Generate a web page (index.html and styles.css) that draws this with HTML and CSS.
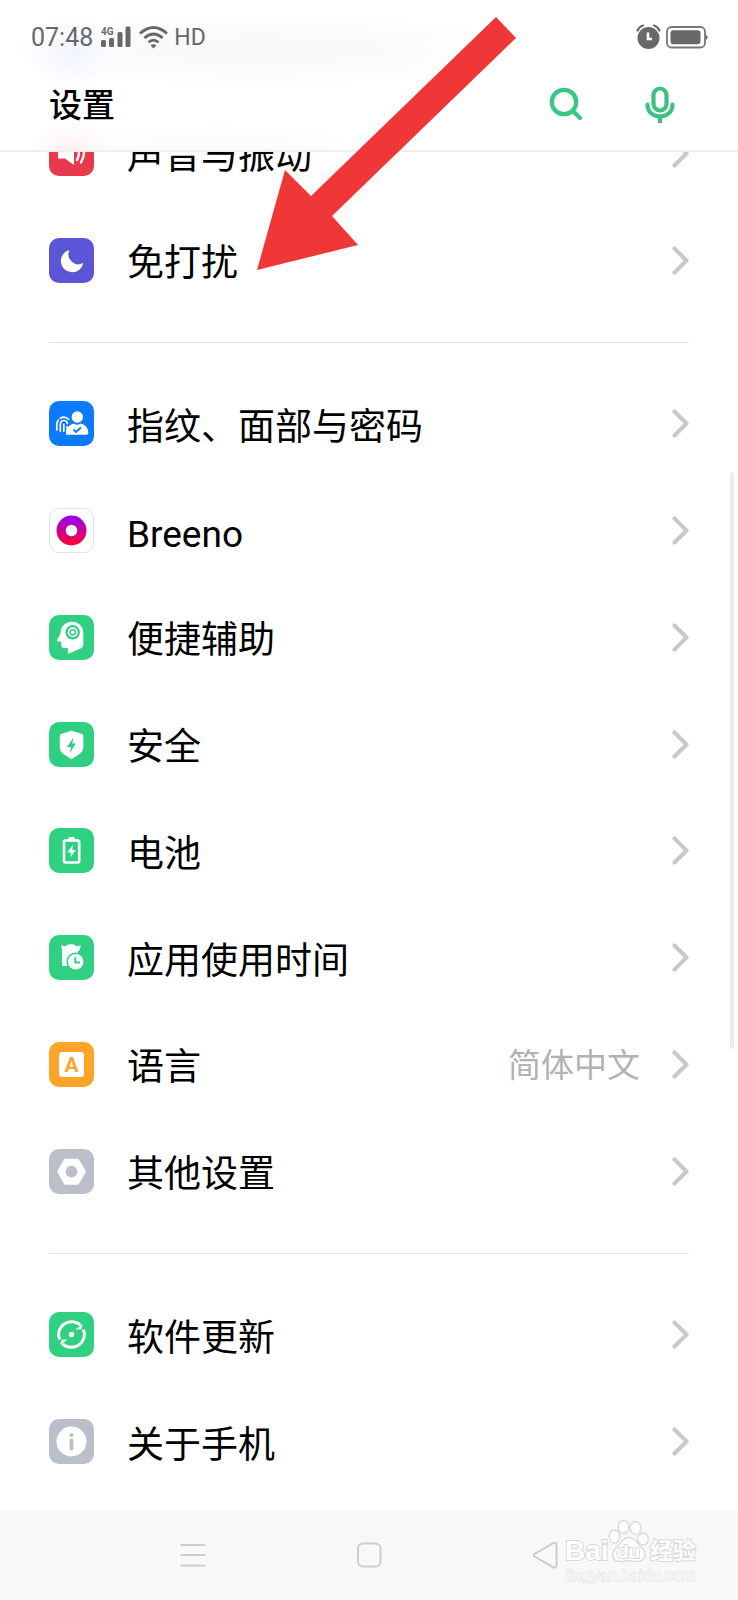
FILE: index.html
```html
<!DOCTYPE html>
<html lang="zh-CN">
<head>
<meta charset="utf-8">
<meta name="viewport" content="width=device-width, initial-scale=1">
<title>设置</title>
<link rel="stylesheet" href="styles.css">
</head>
<body>
<svg class="defs" aria-hidden="true">
  <symbol id="chevron" viewBox="0 0 17 29"><path d="M2.5 2.5L14.500 14.500L2.500 26.500" fill="none" stroke="#c9c9c9" stroke-width="4.200" stroke-linecap="round" stroke-linejoin="round"/></symbol>
</svg>
<div class="screen">
  <header class="topbar">
    <div class="status">
      <div class="status-group">
        <span class="clock">07:48</span>
        <span class="signal">
          <svg width="30" height="22" viewBox="0 0 30 22" fill="#686868"><rect x="0" y="14" width="5" height="7" rx="1.500"/><rect x="8" y="12" width="5" height="9" rx="1.500"/><rect x="16.500" y="6" width="5" height="15" rx="1.500"/><rect x="24.500" y="0.500" width="5" height="20.500" rx="1.500"/><text x="0" y="8.500" class="net">4G</text></svg>
        </span>
        <svg class="wifi" width="29" height="23" viewBox="0 0 29 23" fill="none" stroke="#686868" stroke-width="2.800"><path d="M1 7.500Q14.500-4.500 28 7.500"/><path d="M5.300 12Q14.500 4 23.700 12"/><path d="M9.500 16.300Q14.500 12 19.500 16.300"/><path d="M11.500 19.300Q14.500 17.300 17.500 19.300L14.500 22.500z" fill="#686868" stroke="none"/></svg>
        <span class="hd">HD</span>
      </div>
      <div class="status-group status-group--end">
        <svg width="25" height="26" viewBox="0 0 25 26"><circle cx="12.500" cy="14" r="11" fill="#686868"/><path d="M1.500 6.500Q3.500 2.500 7 1.500M23.500 6.500Q21.500 2.500 18 1.500" fill="none" stroke="#686868" stroke-width="2.200" stroke-linecap="round"/><path d="M12 8.500V15H16" fill="none" stroke="#fff" stroke-width="2.600"/></svg>
        <svg width="42" height="23" viewBox="0 0 42 23"><rect x="1" y="1" width="38" height="20.500" rx="4.500" fill="none" stroke="#777" stroke-width="1.800"/><rect x="4.500" y="4.300" width="30" height="14" rx="3" fill="#686868"/><path d="M39.500 8.500Q41.500 9 41.500 11.300T39.500 14z" fill="#686868"/></svg>
      </div>
    </div>
    <div class="titlebar">
      <h1 class="title">设置</h1>
      <div class="actions">
        <button class="action" type="button" aria-label="搜索"><svg width="34" height="34" viewBox="0 0 34 34" fill="none" stroke="#38c886" stroke-width="4.300" stroke-linecap="round"><circle cx="15" cy="15" r="12.200"/><path d="M24.500 24.500L31 31"/></svg></button>
        <button class="action" type="button" aria-label="语音搜索"><svg width="30" height="37" viewBox="0 0 30 37" fill="none" stroke="#3fc183" stroke-width="4.200"><rect x="8.500" y="2.500" width="13" height="22" rx="6.500"/><path d="M2.500 18.500C2.500 26 8 30.300 15 30.300S27.500 26 27.500 18.500" stroke-linecap="round"/><path d="M15 30V37" stroke-width="4.500"/></svg></button>
      </div>
    </div>
  </header>

  <main class="settings">
    <ul class="group group--short">
      <li class="item"><a class="row" href="#sound">
        <svg class="icon" viewBox="0 0 45 45"><rect width="45" height="45" rx="10" fill="#e73a4e"/><path d="M9 17H15L25 9.500V34L16 27.500H9z" fill="#fff"/><path d="M28.500 16Q31.500 22 28 29M33 13.500Q37.500 22 32 31.500" fill="none" stroke="#fff" stroke-width="2.300" stroke-linecap="round"/></svg>
        <span class="label">声音与振动</span><svg class="chevron"><use href="#chevron"/></svg></a></li>
      <li class="item"><a class="row" href="#dnd">
        <svg class="icon" viewBox="0 0 45 45"><rect width="45" height="45" rx="10" fill="#5b56d6"/><path d="M20.500 12A11.300 11.300 0 1 0 34.300 24.800A9.800 9.800 0 0 1 20.500 12z" fill="#fff"/></svg>
        <span class="label">免打扰</span><svg class="chevron"><use href="#chevron"/></svg></a></li>
    </ul>
    <hr class="rule">
    <ul class="group group--long">
      <li class="item"><a class="row" href="#biometrics">
        <svg class="icon" viewBox="0 0 45 45"><rect width="45" height="45" rx="10" fill="#0a7bfb"/><g fill="none" stroke="#fff" stroke-width="1.700" stroke-linecap="round"><path d="M7.800 29V23.500Q8 20.500 9.500 19"/><path d="M11.300 17.300Q15.500 14.300 19.700 18.300"/><path d="M11.300 30.300V23.500Q11.500 19.500 14.800 19.500T18.300 22.500"/><path d="M14.800 30.300V23.300M18.200 30V25.500"/></g><circle cx="28.300" cy="16" r="5.700" fill="#fff"/><path d="M17 33.700V31Q18.500 23.500 25 22.500Q28.300 25 31.500 22.500Q38.500 24 39.300 31V32Q39 33.700 37.500 33.700z" fill="#fff"/><path d="M24.500 28.500L27 31L32 26.500" fill="none" stroke="#0a7bfb" stroke-width="1.900"/></svg>
        <span class="label">指纹、面部与密码</span><svg class="chevron"><use href="#chevron"/></svg></a></li>
      <li class="item"><a class="row" href="#breeno">
        <svg class="icon" viewBox="0 0 45 45"><defs><linearGradient id="ring" x1="0" y1="0" x2="0" y2="1"><stop offset="0" stop-color="#9500f5"/><stop offset=".5" stop-color="#c8009a"/><stop offset="1" stop-color="#ff0028"/></linearGradient></defs><rect x=".5" y=".5" width="44" height="44" rx="9.500" fill="#fff" stroke="#e2e2e2"/><circle cx="22.500" cy="22.500" r="15" fill="url(#ring)"/><circle cx="22.500" cy="22.500" r="5.800" fill="#fff"/></svg>
        <span class="label">Breeno</span><svg class="chevron"><use href="#chevron"/></svg></a></li>
      <li class="item"><a class="row" href="#assist">
        <svg class="icon" viewBox="0 0 45 45"><rect width="45" height="45" rx="10" fill="#2fd082"/><path d="M22.500 6.700C29.500 6.500 34.300 11.500 34.300 18V30Q34.300 32.500 31.500 33.500L20 38.500Q18.800 38.800 18.800 37.500V33H15Q12.500 33 12.300 30.500L12 26.500H8.500Q7.500 26 8.200 24.800L11.500 18.500C11.500 11.500 16 7 22.500 6.700z" fill="#fff"/><circle cx="23.700" cy="17.300" r="7.200" fill="#2fd082"/><circle cx="23.700" cy="17.300" r="5" fill="#fff"/><circle cx="23.700" cy="17.300" r="3.400" fill="#2fd082"/><circle cx="23.700" cy="17.300" r="1.900" fill="#fff"/></svg>
        <span class="label">便捷辅助</span><svg class="chevron"><use href="#chevron"/></svg></a></li>
      <li class="item"><a class="row" href="#security">
        <svg class="icon" viewBox="0 0 45 45"><rect width="45" height="45" rx="10" fill="#2fd082"/><path d="M22.500 8.800L33 12Q34.300 12.500 34.300 14V25.500C34.300 30.500 29 33 22.500 37.300C16 33 10.800 30.500 10.800 25.500V14Q10.800 12.500 12 12z" fill="#fff"/><path d="M24.500 15.500L18 25H22L20.700 31L27 21.500H23.300z" fill="#2fd082"/></svg>
        <span class="label">安全</span><svg class="chevron"><use href="#chevron"/></svg></a></li>
      <li class="item"><a class="row" href="#battery">
        <svg class="icon" viewBox="0 0 45 45"><rect width="45" height="45" rx="10" fill="#2fd082"/><rect x="15" y="12.500" width="15.200" height="22" rx="1.500" fill="none" stroke="#fff" stroke-width="2.600"/><path d="M19.500 12V10Q19.500 9 20.500 9H24.700Q25.700 9 25.700 10V12z" fill="#fff"/><path d="M23.800 17L18.500 24.500H22L21.300 29.500L26.700 22H23.300z" fill="#fff"/></svg>
        <span class="label">电池</span><svg class="chevron"><use href="#chevron"/></svg></a></li>
      <li class="item"><a class="row" href="#screentime">
        <svg class="icon" viewBox="0 0 45 45"><rect width="45" height="45" rx="10" fill="#2fd082"/><path d="M12 10.500L16.500 11.200Q22 7 27.500 11.200L31.800 10.500L30.500 15.300Q29 15.500 28.500 19H17V31H13.500Q13 31 13 29.500V14.500z" fill="#fff"/><path d="M16 17H25V31H16z" fill="#fff"/><circle cx="26.700" cy="26.700" r="9.300" fill="#2fd082"/><circle cx="26.700" cy="26.700" r="7.700" fill="#fff"/><path d="M26.300 22.300V27.500H31" fill="none" stroke="#2fd082" stroke-width="1.900"/></svg>
        <span class="label">应用使用时间</span><svg class="chevron"><use href="#chevron"/></svg></a></li>
      <li class="item"><a class="row" href="#language">
        <svg class="icon" viewBox="0 0 45 45"><rect width="45" height="45" rx="10" fill="#fea529"/><rect x="10" y="10" width="25" height="25" rx="3.500" fill="#fff"/><text x="22.500" y="29.500" class="letter">A</text></svg>
        <span class="label">语言</span><span class="value">简体中文</span><svg class="chevron"><use href="#chevron"/></svg></a></li>
      <li class="item"><a class="row" href="#other">
        <svg class="icon" viewBox="0 0 45 45"><rect width="45" height="45" rx="10" fill="#babfca"/><path d="M16.500 11.500H28.500L35 22.700L28.500 34H16.500L10 22.700z" fill="#fff" stroke="#fff" stroke-width="3.500" stroke-linejoin="round"/><circle cx="22.500" cy="22.700" r="5.900" fill="#babfca"/></svg>
        <span class="label">其他设置</span><svg class="chevron"><use href="#chevron"/></svg></a></li>
    </ul>
    <hr class="rule">
    <ul class="group group--short">
      <li class="item"><a class="row" href="#update">
        <svg class="icon" viewBox="0 0 45 45"><rect width="45" height="45" rx="10" fill="#2fd082"/><g fill="none" stroke="#fff" stroke-width="3"><path d="M10.500 27.500A13 13 0 0 1 31.500 13.200"/><path d="M34.500 17.500A13 13 0 0 1 13.500 31.800"/></g><path d="M33.800 12L32.500 17.200L26.500 17.500zM11.200 33L12.500 27.800L18.500 27.500z" fill="#fff"/><circle cx="22.500" cy="22.500" r="2.700" fill="#fff"/></svg>
        <span class="label">软件更新</span><svg class="chevron"><use href="#chevron"/></svg></a></li>
      <li class="item"><a class="row" href="#about">
        <svg class="icon" viewBox="0 0 45 45"><rect width="45" height="45" rx="10" fill="#babfca"/><circle cx="22.500" cy="22.500" r="15" fill="#fff"/><circle cx="22.500" cy="16" r="2.100" fill="#babfca"/><path d="M22.500 21.500V29.500" stroke="#babfca" stroke-width="3.800" stroke-linecap="round"/></svg>
        <span class="label">关于手机</span><svg class="chevron"><use href="#chevron"/></svg></a></li>
    </ul>
  </main>

  <nav class="navbar" aria-label="系统导航">
    <button class="nav-button" type="button" aria-label="最近任务"><svg width="26" height="26" viewBox="0 0 26 26" stroke="#cdcdcd" stroke-width="2"><path d="M.5 3H25.500M.5 13H25.500M.5 23.500H25.500"/></svg></button>
    <button class="nav-button" type="button" aria-label="主屏幕"><svg width="26" height="26" viewBox="0 0 26 26" fill="none" stroke="#cdcdcd" stroke-width="2"><rect x="2" y="1.500" width="22.500" height="23" rx="5"/></svg></button>
    <button class="nav-button" type="button" aria-label="返回"><svg width="26" height="28" viewBox="0 0 26 28" fill="none" stroke="#cdcdcd" stroke-width="2" stroke-linejoin="round"><path d="M21 2.200L2.500 13Q1 14.300 2.500 15.500L21 26.200Q24.500 27.500 24.500 24.500V4Q24.500 1 21 2.200z"/></svg></button>
  </nav>

  <div class="scrollbar"></div>
  <svg class="pointer" width="260" height="255" viewBox="0 0 260 255" aria-hidden="true"><path d="M239 1L259 22L75 200L101 229L0 254L28 154L54 180z" fill="#ef3737"/></svg>
  <svg class="watermark" width="136" height="66" viewBox="0 0 136 66">
    <g fill="#fff" stroke="#d9d9d9" stroke-width="1.300">
      <ellipse cx="49.500" cy="18.500" rx="5.300" ry="6.500"/><ellipse cx="58.500" cy="9" rx="5.300" ry="6.700"/><ellipse cx="70.500" cy="10" rx="5.300" ry="6.500"/><ellipse cx="78" cy="21" rx="5.300" ry="6"/>
      <text x="0" y="42" class="mark-latin">Bai</text>
      <path d="M64 19.500C70.500 19.500 71.500 25 76 29C82 34 81.500 43.500 72.500 43.500C68.500 43.500 66.500 42.500 64 42.500S59.500 43.500 55.500 43.500C46 43.500 46 34 52 29C56.500 25 57.500 19.500 64 19.500z"/>
      <text x="52" y="40" class="mark-du">du</text>
      <text x="85" y="41" class="mark-han">经验</text>
    </g>
    <text x="1" y="63" class="mark-url">jingyan.baidu.com</text>
  </svg>
</div>
</body>
</html>
```
FILE: styles.css
```css
* {
  box-sizing: border-box;
}

body {
  margin: 0;
  background: #fff;
  color: #000;
  font-family: Roboto, "Noto Sans CJK SC", sans-serif;
}

button {
  display: flex;
  align-items: center;
  justify-content: center;
  padding: 0;
  border: 0;
  background: none;
}

.defs {
  display: none;
}

.screen {
  position: relative;
  display: flex;
  flex-direction: column;
  min-height: 100vh;
  overflow: hidden;
}

/* Bar that floats over the scrolled list */
.topbar {
  position: absolute;
  inset: 0 0 auto;
  z-index: 1;
  height: 152px;
  border-bottom: 2px solid #eeefef;
  background:
    radial-gradient(ellipse 44px 36px at 72px 52px, #f0f5ff, transparent),
    radial-gradient(ellipse 40px 30px at 72px 150px, #fff0f0, transparent),
    radial-gradient(ellipse 270px 36px at 260px 50px, #fafafa 40%, transparent),
    radial-gradient(ellipse 160px 26px at 220px 150px, #fafafa, transparent),
    #fff;
}

.status {
  display: flex;
  justify-content: space-between;
  padding: 23px 30px 0 31px;
}

.status-group {
  display: flex;
  align-items: center;
  gap: 8px;
  height: 28px;
  color: #686868;
  font-size: 24px;
  line-height: 28px;
}

.status-group--end {
  gap: 5px;
}

.signal {
  display: flex;
}

.clock,
.hd {
  padding-top: 2px;
}

.clock {
  font-size: 25px;
}

.hd {
  margin-left: -2px;
  font-size: 23px;
}

.net {
  font: 700 10px Roboto, sans-serif;
}

.titlebar {
  display: flex;
  align-items: center;
  justify-content: space-between;
  padding: 27px 63px 0 49px;
}

.title {
  margin: 0;
  padding-top: 4px;
  font-size: 33px;
  font-weight: 500;
  line-height: 48px;
}

.actions {
  display: flex;
  gap: 62px;
}

.settings {
  display: flex;
  flex: 1;
  flex-direction: column;
  padding: 100px 49px 15px;
}

.group {
  display: flex;
  flex-direction: column;
  flex: 2 0 0px;
  margin: 0;
  padding: 0;
  list-style: none;
}

.group--long {
  flex-grow: 8;
}

.item {
  display: flex;
  flex: 1;
  min-height: 64px;
}

.row {
  display: flex;
  flex: 1;
  align-items: center;
  color: inherit;
  text-decoration: none;
}

.rule {
  width: 100%;
  height: 1px;
  margin: 28px 0;
  border: 0;
  background: #e2e2e2;
}

.icon {
  flex: none;
  width: 45px;
  height: 45px;
}

.label {
  flex: 1;
  margin-left: 33px;
  padding-top: 8px;
  font-size: 37px;
  line-height: 48px;
}

.value {
  margin-right: 32px;
  padding-top: 4px;
  color: #b2b2b2;
  font-size: 33px;
  line-height: 48px;
}

.chevron {
  flex: none;
  width: 17px;
  height: 29px;
}

.letter {
  fill: #fea529;
  font: 700 21px Roboto, sans-serif;
  text-anchor: middle;
}

.navbar {
  display: grid;
  grid-template-columns: repeat(3, 1fr);
  height: 90px;
  padding: 0 105px;
  background: #f8f8f8;
}

.scrollbar {
  position: absolute;
  top: 472px;
  right: 4px;
  width: 4px;
  height: 577px;
  border-radius: 2px;
  background: #ececec;
}

.pointer {
  position: absolute;
  top: 16px;
  left: 257px;
  z-index: 2;
}

.watermark {
  position: absolute;
  right: 37px;
  bottom: 16px;
}

.mark-latin,
.mark-du {
  font: 700 28px "Liberation Sans", sans-serif;
  paint-order: stroke;
  stroke-width: 2px;
}

.mark-du {
  font-size: 19px;
}

.mark-han {
  font: 700 23px "Noto Sans CJK SC", sans-serif;
  paint-order: stroke;
  stroke-width: 2px;
}

.mark-url {
  fill: #fafafa;
  stroke: #dedede;
  stroke-width: 1px;
  paint-order: stroke;
  font: 16px "Liberation Sans", sans-serif;
}
```
